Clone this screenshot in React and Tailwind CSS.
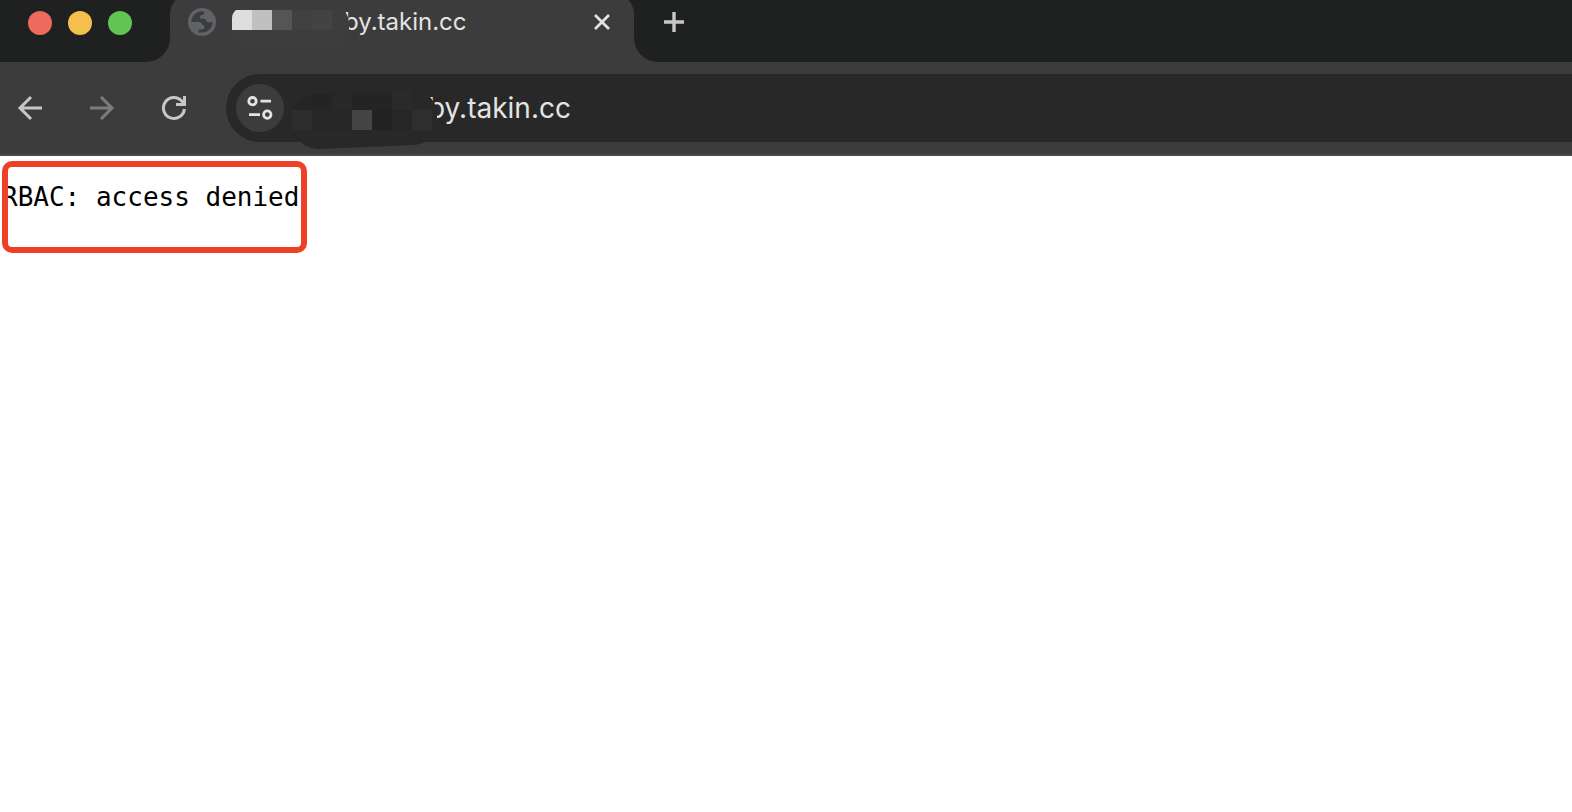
const lights = [
  { name: "Close window", color: "bg-[#ed6a5e]" },
  { name: "Minimize window", color: "bg-[#f5bf4f]" },
  { name: "Zoom window", color: "bg-[#61c554]" },
];

function GlobeIcon() {
  return (
    <svg viewBox="0 0 28 28" className="w-7 h-7 shrink-0" aria-hidden="true">
      <circle cx="14" cy="14" r="14" fill="#5f6368" />
      <path
        fill="#3c3c3c"
        d="M3.400 14C3.400 8.600 7.600 3.800 13 3.400H16.200V4.500C16.200 6 15.200 6.800 13.800 6.900C12.400 7 11.800 7.600 11.800 8.900C11.800 10.300 12.800 10.800 14.400 10.800H16.200C17.600 10.800 18 12 18.300 13C18.700 14 19.500 14.300 21 14.300H24.600C24.500 20 20 24.600 14 24.600H10.600V21.500H13.500C15.400 21.500 16.400 20.500 16.400 18.800C16.400 17.500 15.600 16.800 14.200 16.800C13.600 14.800 12.600 14 10.600 14z"
      />
    </svg>
  );
}

function TabSmudge() {
  return (
    <svg viewBox="0 0 118 48" className="absolute left-0 top-2 w-[118px] h-12" aria-hidden="true">
      <path fill="#3d3d3d" d="M0 22V10C1 5 4 1 10 1H108C113 2 117 8 117 16V26C115 36 107 44 92 44H28C12 44 2 36 0 22z" />
      <path fill="#dedede" d="M0 22V10C0 6 2 4 4 2H20V22z" />
      <rect x="20" y="2" width="20" height="20" fill="#c0c0c0" />
      <rect x="40" y="2" width="20" height="20" fill="#555555" />
      <rect x="60" y="2" width="20" height="20" fill="#404040" />
      <rect x="80" y="2" width="20" height="20" fill="#434343" />
    </svg>
  );
}

function AddressSmudge() {
  return (
    <svg viewBox="0 0 146 60" className="absolute left-0 top-4 w-[146px] h-[60px]" aria-hidden="true">
      <path
        fill="#282828"
        d="M0 30C1 16 8 6 22 5L38 3L118 0L135 4C140 9 145 14 145 24V38C141 50 132 54 122 55L100 56L74 57L26 59C12 58 2 50 0 30z"
      />
      <path fill="#252525" d="M2 20C6 11 12 6 20 5V20z" />
      <rect x="20" y="4" width="20" height="16" fill="#242424" />
      <rect x="60" y="3" width="40" height="17" fill="#242424" />
      <rect x="100" y="1" width="20" height="19" fill="#2a2a2a" />
      <rect x="0" y="20" width="20" height="20" fill="#2d2d2d" />
      <rect x="20" y="20" width="40" height="20" fill="#262626" />
      <rect x="60" y="20" width="20" height="20" fill="#444444" />
      <rect x="80" y="20" width="20" height="20" fill="#222222" />
      <rect x="100" y="20" width="20" height="20" fill="#262626" />
      <rect x="120" y="20" width="20" height="20" fill="#2e2e2e" />
    </svg>
  );
}

function TabStrip() {
  return (
    <div className="flex h-[62px] bg-[#3c3c3c] overflow-hidden">
      <div className="w-[170px] shrink-0 flex gap-4 pl-7 pt-[11px] bg-[#1f2120] rounded-br-3xl">
        {lights.map((l) => (
          <button key={l.name} aria-label={l.name} className={`w-6 h-6 rounded-full ${l.color}`} />
        ))}
      </div>

      <div className="w-[464px] shrink-0 bg-[#1f2120]">
        <div className="-mt-1.5 h-[68px] pt-1.5 px-[18px] rounded-t-[20px] bg-[#3c3c3c]">
          <div className="flex items-center h-11">
            <GlobeIcon />
            <div className="relative flex items-center flex-1 h-11 ml-4">
              <span className="pl-[112px] text-2xl text-[#e3e3e3]">by.takin.cc</span>
              <TabSmudge />
            </div>
            <button aria-label="Close tab" className="w-7 h-7 flex items-center justify-center">
              <svg viewBox="0 0 16 16" className="w-4 h-4" fill="none" stroke="#e3e3e3" strokeWidth="2.8">
                <path d="M1 1l14 14M15 1L1 15" />
              </svg>
            </button>
          </div>
        </div>
      </div>

      <div className="flex-1 pl-[30px] bg-[#1f2120] rounded-bl-3xl">
        <button aria-label="New tab" className="w-5 h-11 flex items-center">
          <svg viewBox="0 0 20 20" className="w-5 h-5" fill="none" stroke="#c7c7c7" strokeWidth="3.4">
            <path d="M0 10h20M10 0v20" />
          </svg>
        </button>
      </div>
    </div>
  );
}

function Toolbar() {
  return (
    <div className="flex items-center h-[94px] pl-3.5 bg-[#3c3c3c] border-b-2 border-[#4a4849]">
      <button aria-label="Back" className="w-8 shrink-0">
        <svg viewBox="0 0 32 32" className="w-8 h-8" fill="none" stroke="#c7c7c7" strokeWidth="3">
          <path d="M28 16H6M17 5L6 16l11 11" />
        </svg>
      </button>
      <button aria-label="Forward" disabled className="w-8 ml-10 shrink-0">
        <svg viewBox="0 0 32 32" className="w-8 h-8" fill="none" stroke="#7c7c7c" strokeWidth="3">
          <path d="M4 16h22M15 5l11 11-11 11" />
        </svg>
      </button>
      <button aria-label="Reload" className="w-8 ml-10 shrink-0">
        <svg viewBox="0 0 32 32" className="w-8 h-8" fill="none" stroke="#c7c7c7" strokeWidth="3">
          <path d="M26.400 17A10.500 10.500 0 1 1 23.500 8.700L26 11.500M26.500 4v8.500H18" />
        </svg>
      </button>

      <div className="relative flex items-center flex-1 h-[68px] ml-9 pl-2.5 bg-[#282828] rounded-l-full">
        <button
          aria-label="View site information"
          className="w-12 h-12 shrink-0 flex items-center justify-center rounded-full bg-[#3c3c3c]"
        >
          <svg viewBox="0 0 26 26" className="w-[26px] h-[26px]" fill="none" stroke="#e3e3e3" strokeWidth="2.8">
            <circle cx="5.500" cy="6.200" r="3.700" />
            <path d="M13.500 6.200h10.500M2 19.600h11" />
            <circle cx="20.300" cy="19.600" r="3.700" />
          </svg>
        </button>
        <div className="relative flex items-center flex-1 h-[68px] ml-2">
          <input
            aria-label="Address"
            defaultValue="by.takin.cc"
            className="w-full pl-[136px] bg-transparent text-[28px] text-[#e3e3e3] outline-none"
          />
          <AddressSmudge />
        </div>
      </div>
    </div>
  );
}

export default function App() {
  return (
    <div className="min-h-screen bg-white font-[Inter,sans-serif]">
      <TabStrip />
      <Toolbar />

      <main className="relative px-0.5 pt-[25px]">
        <pre className="text-[26px] leading-8 text-black font-['DejaVu_Sans_Mono',monospace]">
          RBAC: access denied
        </pre>
        {/* highlight frame */}
        <div className="absolute left-0.5 top-[5px] w-[305px] h-[92px] border-6 border-[#ee4026] rounded-[10px]" />
      </main>
    </div>
  );
}
